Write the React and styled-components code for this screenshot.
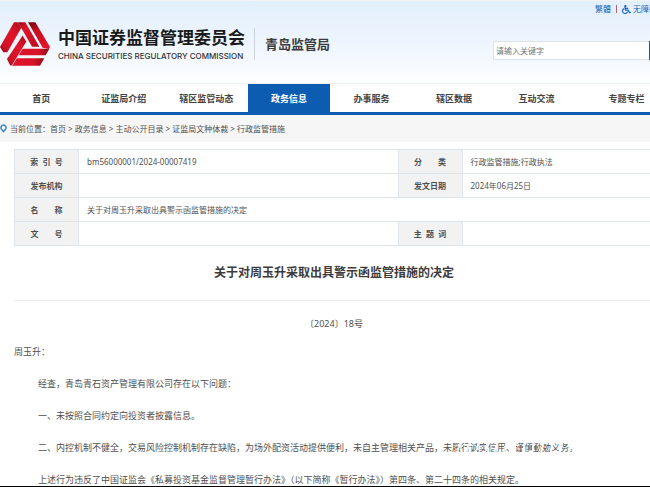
import styled, { createGlobalStyle } from "styled-components";
import { FaWheelchair } from "react-icons/fa";

const GlobalStyle = createGlobalStyle`
  * {
    box-sizing: border-box;
  }
  body {
    margin: 0;
    background: #fff;
    color: #505050;
    font-family: "Noto Sans", "Noto Sans CJK SC", sans-serif;
    font-size: 9px;
    line-height: 12px;
  }
  a {
    color: inherit;
    text-decoration: none;
  }
`;

const Page = styled.div`
  min-height: 100vh;
  overflow: hidden;
  border-bottom: 1px solid #000;
`;

const Header = styled.header`
  display: flex;
  align-items: flex-start;
  height: 84px;
  border-top: 1px solid #f3f3f3;
  border-bottom: 1px solid #eef0f3;
  background: linear-gradient(#e2effc, #eef5fe 50%, #fdfeff);
`;

const Brand = styled.a`
  display: flex;
  align-items: center;
  gap: 8px;
  height: 46px;
  margin-top: 20px;
`;

const BrandText = styled.div`
  white-space: nowrap;
  color: #1a1a1a;
`;

const BrandName = styled.div`
  font-size: 17px;
  font-weight: 700;
  line-height: 24px;
`;

const BrandSub = styled.div`
  font-family: Inter, sans-serif;
  font-size: 8px;
  font-weight: 500;
  line-height: 12px;
  color: #333;
`;

const Bureau = styled.div`
  height: 32px;
  margin: 27px 0 0 9px;
  padding-left: 10px;
  border-left: 1px solid #ccd3da;
  font-size: 13px;
  font-weight: 700;
  line-height: 32px;
  white-space: nowrap;
  color: #3c3c3c;
`;

const Tools = styled.div`
  flex: none;
  width: 189px;
  margin: 2px -32px 0 auto;
`;

const Links = styled.div`
  display: flex;
  justify-content: flex-end;
  align-items: center;
  gap: 5px;
  padding-right: 25px;
  font-size: 8px;
  color: #1c66b5;

  a {
    display: flex;
    align-items: center;
    gap: 2px;
    white-space: nowrap;
  }
`;

const Bar = styled.span`
  width: 1px;
  height: 8px;
  background: #b0607a;
`;

const SearchForm = styled.form`
  display: flex;
  height: 19px;
  margin-top: 26px;

  input {
    flex: 1;
    min-width: 0;
    padding: 0 2px;
    border: 1px solid #dfe4ea;
    border-right: 0;
    background: #fff;
    font-family: inherit;
    font-size: 8px;
  }
  input::placeholder {
    color: #757575;
  }
  button {
    width: 33px;
    padding: 0;
    border: 0;
    background: #0d5cb0;
  }
`;

const Nav = styled.nav`
  display: flex;
  height: 31px;
  overflow: hidden;
  border-bottom: 3px solid #0c5db2;
`;

const NavItem = styled.a`
  flex: none;
  width: ${(props) => (props.$wide ? "15%" : "12.7%")};
  font-weight: 700;
  line-height: 30px;
  text-align: center;
  color: ${(props) => (props.$active ? "#fff" : "#444")};
  background: ${(props) => (props.$active ? "#0c5db2" : "#fff")};
`;

const Crumbs = styled.div`
  display: flex;
  align-items: center;
  gap: 3px;
  height: 27px;
  background: #f6f6f6;
  font-size: 8px;
  white-space: pre;
`;

const Content = styled.main`
  margin: 7px -4px 0 14px;
`;

const InfoTable = styled.table`
  width: 100%;
  table-layout: fixed;
  border-collapse: collapse;
  font-size: 8px;

  th,
  td {
    height: 24px;
    padding: 0;
    border: 1px solid #dde4ea;
  }
  th {
    background: #f2f2f2;
    white-space: pre;
  }
  td {
    padding-left: 8px;
  }
`;

const Col = styled.col`
  width: ${(props) => props.$width};
`;

const Title = styled.h1`
  margin: 0;
  padding: 18px 0;
  border-bottom: 1px solid #ececec;
  font-size: 12px;
  line-height: 18px;
  text-align: center;
  color: #3c3c3c;
`;

const DocNo = styled.p`
  margin: 17px 0 16px;
  text-align: center;
`;

const Para = styled.p`
  margin: 0 0 20px;
  padding-left: ${(props) => (props.$indent ? "24px" : 0)};
  white-space: nowrap;

  &:last-child {
    margin-bottom: 0;
  }
`;

// worn print: thin pale streaks run over the words
const Worn = styled.span`
  position: relative;

  &::after {
    content: "";
    position: absolute;
    inset: 0;
    background: repeating-linear-gradient(
      105deg,
      transparent 0 7px,
      rgba(255, 255, 255, 0.8) 7px 9px
    );
  }
`;

const menus = [
  "首页",
  "证监局介绍",
  "辖区监管动态",
  "政务信息",
  "办事服务",
  "辖区数据",
  "互动交流",
  "专题专栏",
];

const crumbs = [
  "首页",
  "政务信息",
  "主动公开目录",
  "证监局文种体裁",
  "行政监管措施",
];

const Logo = () => (
  <svg width="50" height="46" viewBox="0 0 150 138">
    <defs>
      <linearGradient id="down" x1="0" y1="0" x2="1" y2="1">
        <stop offset="0" stopColor="#8e0a12" />
        <stop offset="0.3" stopColor="#e2142a" />
        <stop offset="1" stopColor="#b80d1c" />
      </linearGradient>
      <linearGradient id="left" x1="1" y1="0" x2="0" y2="1">
        <stop offset="0" stopColor="#a80c18" />
        <stop offset="0.4" stopColor="#e2142a" />
        <stop offset="0.8" stopColor="#d01125" />
        <stop offset="1" stopColor="#7d070e" />
      </linearGradient>
      <linearGradient id="up" x1="0.2" y1="0" x2="0.5" y2="1">
        <stop offset="0" stopColor="#7d070e" />
        <stop offset="0.35" stopColor="#c80f20" />
        <stop offset="1" stopColor="#e2142a" />
      </linearGradient>
      <linearGradient id="flat" x1="0" y1="0" x2="1" y2="0">
        <stop offset="0" stopColor="#e2142a" />
        <stop offset="0.7" stopColor="#d81227" />
        <stop offset="1" stopColor="#8e0a12" />
      </linearGradient>
    </defs>
    <path d="M42 4 L54 4 L64 20 L22 94 L10 94 L0 78 Z" fill="url(#left)" />
    <path d="M84 4 L106 4 L150 78 L146 84 L128 80 Z" fill="url(#up)" />
    <path d="M44 112 L133 112 L120 134 L32 134 Z" fill="url(#flat)" />
    <path d="M54 4 L76 4 L118 77 L96 77 Z" fill="url(#down)" />
    <path d="M54 83 L148 83 L137 103 L42 103 Z" fill="url(#flat)" />
    <path
      d="M68 42 L80 62 L36 134 L30 134 L20 114 Z"
      fill="url(#left)"
      stroke="#edf4fd"
      strokeWidth="2"
    />
    <path d="M78 66 L87 80 L69 80 Z" fill="#edf4fd" />
  </svg>
);

const Pin = () => (
  <svg width="7" height="9" viewBox="0 0 7 9">
    <path
      d="M3.5 1 A2.6 2.6 0 0 1 5.6 5 L3.5 7.6 L1.4 5 A2.6 2.6 0 0 1 3.5 1 Z"
      fill="#fff"
      stroke="#3f88c8"
      strokeWidth="1.6"
    />
  </svg>
);

export default function App() {
  return (
    <Page>
      <GlobalStyle />
      <Header>
        <Brand href="#">
          <Logo />
          <BrandText>
            <BrandName>中国证券监督管理委员会</BrandName>
            <BrandSub>CHINA SECURITIES REGULATORY COMMISSION</BrandSub>
          </BrandText>
        </Brand>
        <Bureau>青岛监管局</Bureau>
        <Tools>
          <Links>
            <a href="#">繁體</a>
            <Bar />
            <a href="#">
              <FaWheelchair size={9} />
              无障碍
            </a>
          </Links>
          <SearchForm>
            <input type="text" placeholder="请输入关键字" aria-label="请输入关键字" />
            <button type="submit" aria-label="搜索" />
          </SearchForm>
        </Tools>
      </Header>
      <Nav>
        {menus.map((menu) => (
          <NavItem
            key={menu}
            href="#"
            $active={menu === "政务信息"}
            $wide={menu === "专题专栏"}
          >
            {menu}
          </NavItem>
        ))}
      </Nav>
      <Crumbs>
        <Pin />
        <span>
          当前位置：
          {crumbs.map((crumb, i) => (
            <span key={crumb}>
              {i > 0 && " > "}
              <a href="#">{crumb}</a>
            </span>
          ))}
        </span>
      </Crumbs>
      <Content>
        <InfoTable>
          <colgroup>
            <Col $width="64px" />
            <Col $width="50%" />
            <Col $width="64px" />
            <Col $width="auto" />
          </colgroup>
          <tbody>
            <tr>
              <th scope="row">{"索  引  号"}</th>
              <td>bm56000001/2024-00007419</td>
              <th scope="row">分　　类</th>
              <td>行政监管措施;行政执法</td>
            </tr>
            <tr>
              <th scope="row">发布机构</th>
              <td />
              <th scope="row">发文日期</th>
              <td>2024年06月25日</td>
            </tr>
            <tr>
              <th scope="row">名　　称</th>
              <td colSpan={3}>关于对周玉升采取出具警示函监管措施的决定</td>
            </tr>
            <tr>
              <th scope="row">文　　号</th>
              <td />
              <th scope="row">{"主  题  词"}</th>
              <td />
            </tr>
          </tbody>
        </InfoTable>
        <Title>关于对周玉升采取出具警示函监管措施的决定</Title>
        <DocNo>〔2024〕18号</DocNo>
        <Para>周玉升：</Para>
        <Para $indent>经查，青岛青石资产管理有限公司存在以下问题：</Para>
        <Para $indent>一、未按照合同约定向投资者披露信息。</Para>
        <Para $indent>
          二、内控机制不健全，交易风险控制机制存在缺陷，为场外配资活动提供便利，未自主管理相关产品，未
          <Worn>履行诚实信用、谨慎勤勉义务。</Worn>
        </Para>
        <Para $indent>
          上述行为违反了中国证监会《私募投资基金监督管理暂行办法》（以下简称《暂行办法》）第四条、第二十四条的相关规定。
        </Para>
      </Content>
    </Page>
  );
}
